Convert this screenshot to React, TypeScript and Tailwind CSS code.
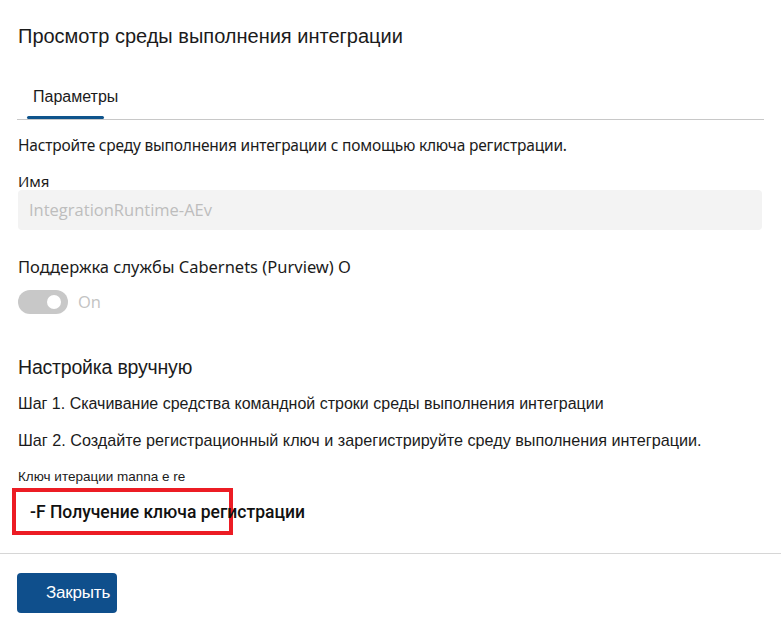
export default function App() {
  return (
    <div className="w-[781px] h-[635px] bg-white overflow-hidden flex flex-col text-[#1b1b1b]" style={{ fontFamily: '"Liberation Sans", Arial, sans-serif' }}>
      <div className="flex flex-col px-[18px]">
        <div className="pt-[24px] h-[54px] text-[20px] leading-[24px]">Просмотр среды выполнения интеграции</div>
        <div className="mt-[33px] flex flex-col">
          <div className="flex">
            <div className="flex flex-col items-start px-[9px]">
              <div className="text-[16px] leading-[20px] pl-[6px] pb-[9px]">Параметры</div>
              <div className="w-[77px] h-[3px] rounded-full bg-[#0f548c]" />
            </div>
          </div>
          <div className="h-px bg-[#c8c8c8] w-[747px] -mx-[1px]" />
        </div>
        <div className="mt-[16px] text-[15.5px] leading-[18px] tracking-[-0.2px] whitespace-nowrap" style={{ fontFamily: '"Noto Sans", "Open Sans", sans-serif' }}>
          Настройте среду выполнения интеграции с помощью ключа регистрации.
        </div>
        <div className="mt-[19px] text-[15px] leading-[16px]" style={{ fontFamily: '"Noto Sans", sans-serif' }}>Имя</div>
        <div className="mt-[1px] h-[40px] w-[744px] rounded-[4px] bg-[#f3f3f3] flex items-center px-[11px] text-[16.5px] text-[#bdbdbd]" style={{ fontFamily: '"Open Sans", sans-serif' }}>
          IntegrationRuntime-AEv
        </div>
        <div className="mt-[27px] text-[16.5px] leading-[20px] whitespace-nowrap" style={{ fontFamily: '"Noto Sans", sans-serif' }}>Поддержка службы Cabernets (Purview) O</div>
        <div className="mt-[13px] flex items-center gap-[10px]">
          <div className="w-[50px] h-[24px] rounded-full bg-[#c8c8c8] flex items-center justify-end pr-[7px]">
            <div className="w-[14px] h-[14px] rounded-full bg-white" />
          </div>
          <span className="text-[16.5px] text-[#c3c3c3]" style={{ fontFamily: '"Open Sans", sans-serif' }}>On</span>
        </div>
        <div className="mt-[40px] text-[19.5px] leading-[24px] tracking-[-0.2px]">Настройка вручную</div>
        <div className="mt-[15px] text-[16px] leading-[20px] whitespace-nowrap">Шаг 1. Скачивание средства командной строки среды выполнения интеграции</div>
        <div className="mt-[16px] text-[16.2px] leading-[20px] whitespace-nowrap">Шаг 2. Создайте регистрационный ключ и зарегистрируйте среду выполнения интеграции.</div>
        <div className="mt-[19px] text-[13.5px] leading-[16px]">Ключ итерации manna e re</div>
        <div className="relative -ml-[6px] mt-[3px] h-[47px]">
          <div className="absolute left-0 top-0 w-[221px] h-[47px] border-[4px] border-[#ec1c24]" />
          <div className="absolute left-[18px] top-[13px] text-[17.5px] leading-[22px] font-medium whitespace-nowrap text-[#111]" style={{ fontFamily: 'Roboto, "Liberation Sans", sans-serif' }}>-F Получение ключа регистрации</div>
        </div>
      </div>
      <div className="mt-[18px] h-px bg-[#d6d6d6] w-full" />
      <div className="px-[17px] pt-[19px]">
        <button className="w-[100px] h-[40px] rounded-[4px] bg-[#0f4f8c] text-white text-[17px] flex items-center pl-[29px] tracking-[-0.2px]">Закрыть</button>
      </div>
    </div>
  );
}
